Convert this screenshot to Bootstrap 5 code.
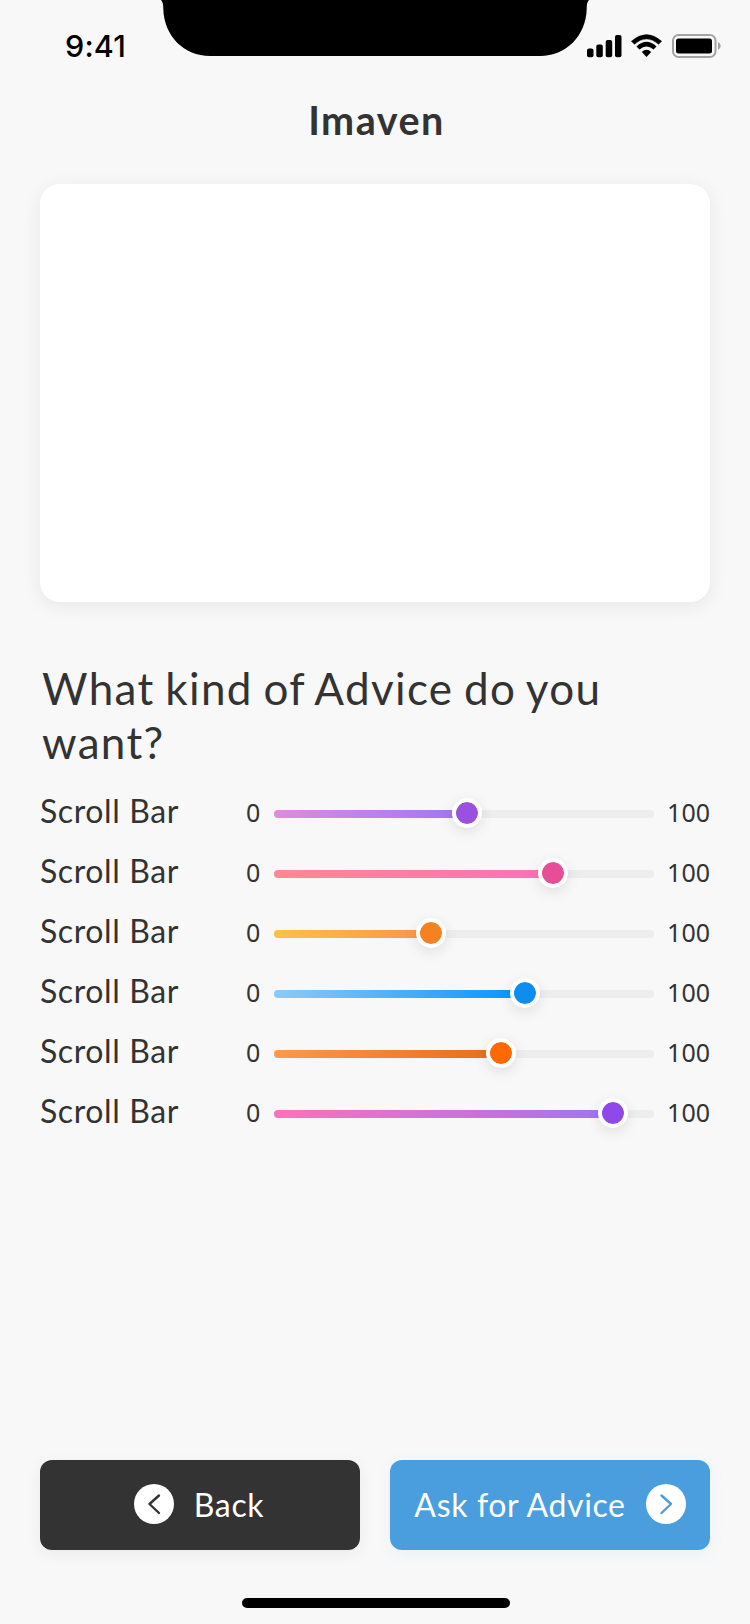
<!DOCTYPE html>
<html lang="en">
<head>
<meta charset="utf-8">
<meta name="viewport" content="width=device-width, initial-scale=1">
<title>Imaven</title>
<link href="https://cdn.jsdelivr.net/npm/bootstrap@5.3.0/dist/css/bootstrap.min.css" rel="stylesheet">
<style>
  body { background: #f8f8f8; color: #333; font-family: Lato, "Liberation Sans", sans-serif; }
  .screen { width: 750px; height: 1624px; overflow: hidden; }
  .status { height: 88px; }
  .clock { font: 500 30.5px/38px Inter, "Liberation Sans", sans-serif; color: #000; margin: 27px 0 0 65px; letter-spacing: .2px; }
  .notch { left: 157px; top: 0; }
  .signals { margin: 32px 29px 0 0; }
  .app-title { font-size: 39.5px; line-height: 64px; height: 96px; font-weight: 700; letter-spacing: 1.5px; padding-left: 3px; }
  .panel { height: 418px; border-radius: 20px; box-shadow: 0 4px 20px rgba(0,0,0,.07); }
  .question { font-size: 44px; line-height: 54px; margin: 59px 0 11px 2px; font-weight: 400; letter-spacing: 1.35px; word-spacing: -2px; }
  .slider-row { height: 60px; }
  .slider-label { width: 198px; font-size: 32px; line-height: 60px; letter-spacing: .6px; padding-top: 1px; height: 60px; }
  .limit { font: 400 25px/60px "Noto Sans", sans-serif; padding-top: 2px; height: 60px; }
  .limit-min { width: 36px; padding-left: 8px; }
  .track { width: 380px; height: 8px; border-radius: 4px; background: #ededed; margin-top: 8px; }
  .fill { height: 8px; border-radius: 4px 0 0 4px; background: linear-gradient(90deg, var(--from), var(--to)); }
  .knob { width: 30px; height: 30px; right: -15px; top: -12px; border: 4px solid #fff; border-radius: 50%; background: var(--knob); background-clip: padding-box; box-shadow: 0 4px 14px rgba(0,0,0,.1); }
  .actions { margin-top: 320px; gap: 30px; }
  .action { --bs-btn-color: #fff; --bs-btn-border-width: 0; width: 320px; height: 90px; border-radius: 12px; font-size: 32px; padding: 0; gap: 20px; color: #fff; letter-spacing: .65px; }
  .action svg { margin-bottom: 2px; }
  .action-back { background: #333; box-shadow: 0 4px 16px rgba(0,0,0,.06); padding-right: 2px; }
  .action-ask { background: #4a9edd; box-shadow: 0 4px 16px rgba(74,158,221,.08); }
  .home-bar { width: 268px; height: 10px; border-radius: 5px; background: #000; margin: 48px 0 0 242px; }
</style>
</head>
<body>
<main class="screen position-relative">
  <header class="status d-flex justify-content-between align-items-start">
    <div class="clock">9:41</div>
    <svg class="notch position-absolute" width="436" height="56" viewBox="0 0 436 56"><path d="M4 0C6 2 6.300 5 6.300 9C7 36 27 56 53 56H383C409 56 429 36 429.700 9C429.700 5 430 2 432 0Z"/></svg>
    <svg class="signals" width="136" height="28" viewBox="0 0 136 28">
      <g transform="translate(2 0)">
        <rect x="0" y="16.500" width="6.500" height="8.700" rx="2"/><rect x="9.300" y="12.500" width="6.500" height="12.700" rx="2"/><rect x="18.700" y="8" width="6.500" height="17.200" rx="2"/><rect x="28" y="3" width="6.500" height="22.200" rx="2"/>
      </g>
      <path d="M46.300 9.200Q61.500-4.200 76.700 9.200L73.600 12.200Q61.500 1.700 49.400 12.200Z" stroke="#000" stroke-width=".4" stroke-linejoin="round"/>
      <path d="M51.500 14.400Q61.500 5.200 71.500 14.400L68.500 17.400Q61.500 11.400 54.500 17.400Z"/>
      <path d="M56.800 20Q61.500 15.700 66.200 20L61.500 25Z"/>
      <rect x="88" y="3" width="42.500" height="22" rx="5.500" fill="none" stroke="#a3a3a3" stroke-width="2"/>
      <rect x="91" y="6.500" width="36" height="15" rx="2.500"/>
      <path d="M133 10Q135.700 11.200 135.700 14T133 18Z" fill="#a3a3a3"/>
    </svg>
  </header>
  <h1 class="app-title text-center mb-0">Imaven</h1>
  <div class="px-4 mx-3">
    <div class="panel bg-white"></div>
    <h2 class="question">What kind of Advice do you<br>want?</h2>
    <div class="slider-row d-flex align-items-center">
      <div class="slider-label">Scroll Bar</div><div class="limit limit-min">0</div>
      <div class="track"><div class="fill position-relative" style="width:193px;--from:#e08bdd;--to:#9f75f3;--knob:#9b51e0"><span class="knob position-absolute"></span></div></div>
      <div class="limit ms-auto">100</div>
    </div>
    <div class="slider-row d-flex align-items-center">
      <div class="slider-label">Scroll Bar</div><div class="limit limit-min">0</div>
      <div class="track"><div class="fill position-relative" style="width:279px;--from:#ff8890;--to:#fd70b9;--knob:#e84d97"><span class="knob position-absolute"></span></div></div>
      <div class="limit ms-auto">100</div>
    </div>
    <div class="slider-row d-flex align-items-center">
      <div class="slider-label">Scroll Bar</div><div class="limit limit-min">0</div>
      <div class="track"><div class="fill position-relative" style="width:157px;--from:#ffc046;--to:#f8944d;--knob:#f58220"><span class="knob position-absolute"></span></div></div>
      <div class="limit ms-auto">100</div>
    </div>
    <div class="slider-row d-flex align-items-center">
      <div class="slider-label">Scroll Bar</div><div class="limit limit-min">0</div>
      <div class="track"><div class="fill position-relative" style="width:251px;--from:#8fcaf7;--to:#0593ff;--knob:#0d8eee"><span class="knob position-absolute"></span></div></div>
      <div class="limit ms-auto">100</div>
    </div>
    <div class="slider-row d-flex align-items-center">
      <div class="slider-label">Scroll Bar</div><div class="limit limit-min">0</div>
      <div class="track"><div class="fill position-relative" style="width:227px;--from:#fb994f;--to:#e86c1b;--knob:#ff6900"><span class="knob position-absolute"></span></div></div>
      <div class="limit ms-auto">100</div>
    </div>
    <div class="slider-row d-flex align-items-center">
      <div class="slider-label">Scroll Bar</div><div class="limit limit-min">0</div>
      <div class="track"><div class="fill position-relative" style="width:339px;--from:#ff70b8;--to:#9f75f3;--knob:#8f48ea"><span class="knob position-absolute"></span></div></div>
      <div class="limit ms-auto">100</div>
    </div>
    <div class="actions d-flex">
      <button type="button" class="btn action action-back d-flex align-items-center justify-content-center">
        <svg width="40" height="40" viewBox="0 0 40 40"><circle cx="20" cy="20" r="20" fill="#fff"/><path d="M25 11.500 15.500 20 25 29" fill="none" stroke="#333" stroke-width="2.400" stroke-linecap="round" stroke-linejoin="round"/></svg>
        <span>Back</span>
      </button>
      <button type="button" class="btn action action-ask d-flex align-items-center justify-content-center">
        <span>Ask for Advice</span>
        <svg width="40" height="40" viewBox="0 0 40 40"><circle cx="20" cy="20" r="20" fill="#fff"/><path d="M15.500 11.500 25 20 15.500 29" fill="none" stroke="#4a9edd" stroke-width="2.400" stroke-linecap="round" stroke-linejoin="round"/></svg>
      </button>
    </div>
  </div>
  <div class="home-bar"></div>
</main>
<script src="https://cdn.jsdelivr.net/npm/bootstrap@5.3.0/dist/js/bootstrap.bundle.min.js"></script>
</body>
</html>
